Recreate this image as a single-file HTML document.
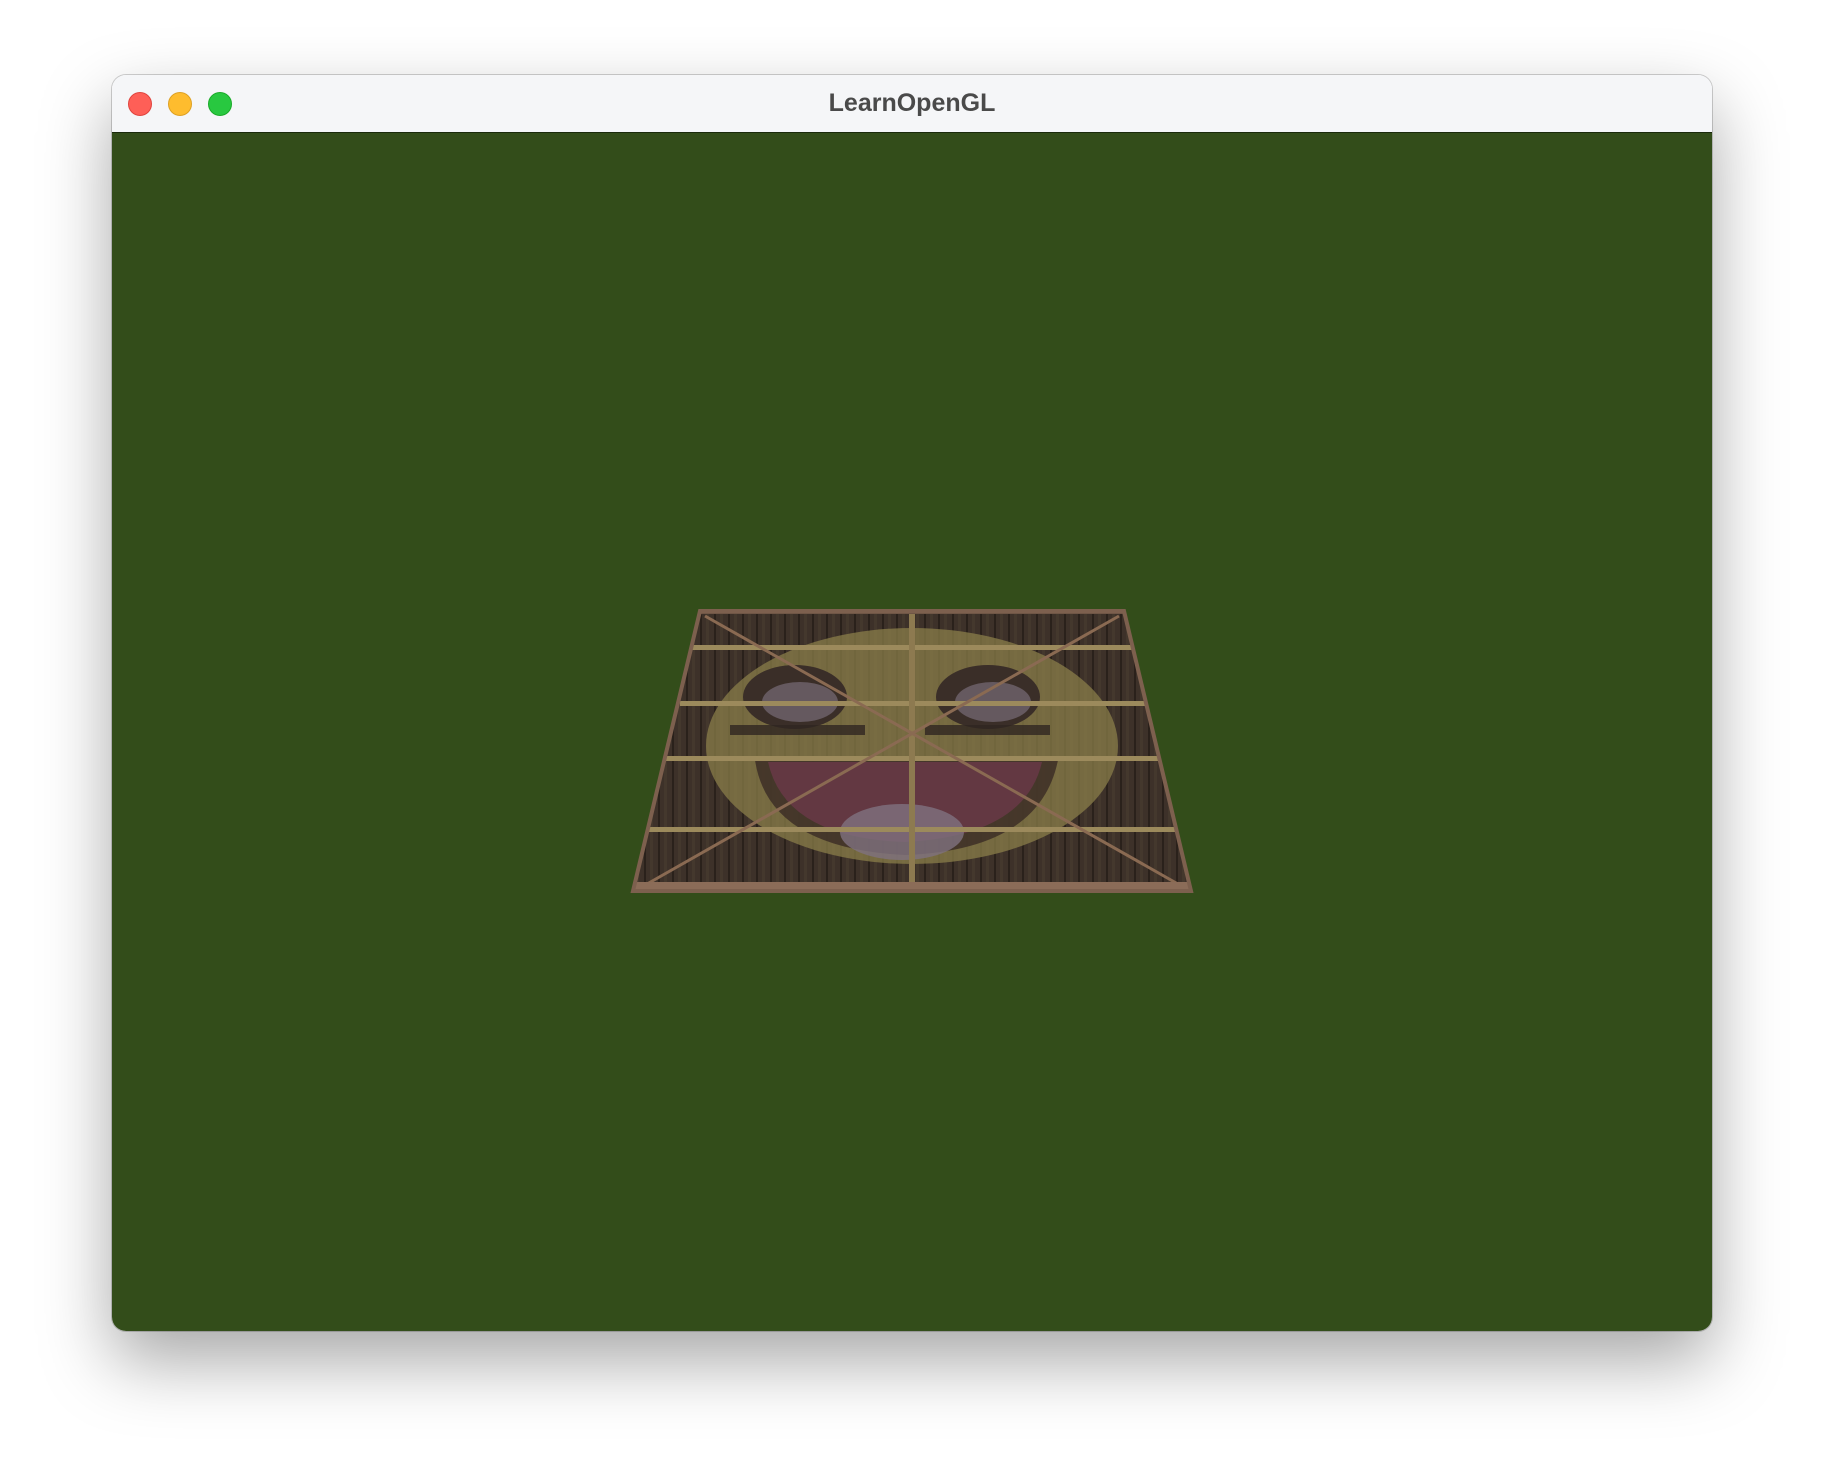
<!DOCTYPE html>
<html><head><meta charset="utf-8"><style>
html,body{margin:0;padding:0;background:#fff;width:1824px;height:1480px;overflow:hidden}
.win{position:absolute;left:112px;top:75px;width:1600px;height:1256px;border-radius:14px;overflow:hidden;box-shadow:0 30px 70px rgba(0,0,0,0.35),0 0 0 1px rgba(0,0,0,0.18)}
.tb{position:absolute;left:0;top:0;width:100%;height:57px;background:#f5f6f8;border-bottom:1px solid #1a2a0c}
.tb .t{position:absolute;left:0;right:0;top:14px;text-align:center;font:bold 25px "Liberation Sans",sans-serif;color:#4a4a4a}
.d{position:absolute;top:17px;width:24px;height:24px;border-radius:50%}
.gl{position:absolute;left:0;top:58px;width:100%;height:1198px;background:#334d1a}
svg{position:absolute;left:0;top:0}
</style></head><body>
<div class="win">
<div class="tb"><div class="d" style="left:16px;background:#fe5f57;border:1px solid #e0443e;box-sizing:border-box"></div><div class="d" style="left:56px;background:#febc2e;border:1px solid #dea123;box-sizing:border-box"></div><div class="d" style="left:96px;background:#28c840;border:1px solid #1aab29;box-sizing:border-box"></div><div class="t">LearnOpenGL</div></div>
<div class="gl"></div>
</div>
<svg width="1824" height="1480" viewBox="0 0 1824 1480">
<defs><clipPath id="q"><polygon points="700,611 1124,611 1191,891 633,891"/></clipPath>
<pattern id="pl" width="14" height="20" patternUnits="userSpaceOnUse"><rect width="14" height="20" fill="#3d3129"/><rect x="0" width="2" height="20" fill="#2a211b"/><rect x="6" width="3" height="20" fill="#4a3c31" opacity=".6"/></pattern></defs>
<g clip-path="url(#q)">
<rect x="630" y="608" width="565" height="286" fill="url(#pl)"/>
<ellipse cx="912" cy="746" rx="206" ry="118" fill="#8a7d4a" opacity=".75"/>
<path d="M755,760 Q768,848 905,855 Q1040,850 1058,760 Z" fill="#3a2a24" opacity=".8"/>
<path d="M768,762 Q785,838 905,842 Q1025,836 1042,762 Z" fill="#633842"/>
<ellipse cx="902" cy="832" rx="62" ry="28" fill="#7f7280" opacity=".8"/>
<ellipse cx="795" cy="697" rx="52" ry="32" fill="#3a2e28"/>
<ellipse cx="800" cy="702" rx="38" ry="20" fill="#65595f"/>
<ellipse cx="988" cy="697" rx="52" ry="32" fill="#3a2e28"/>
<ellipse cx="993" cy="702" rx="38" ry="20" fill="#65595f"/>
<rect x="730" y="725" width="135" height="10" fill="#2f2620" opacity=".8"/>
<rect x="925" y="725" width="125" height="10" fill="#2f2620" opacity=".8"/>
<g fill="#9c8a5c"><rect x="690" y="645" width="445" height="5"/><rect x="680" y="701" width="470" height="5"/><rect x="665" y="756" width="500" height="5"/><rect x="648" y="827" width="530" height="5"/></g>
<rect x="909" y="611" width="6" height="280" fill="#8d7a50"/>
<line x1="705" y1="616" x2="1185" y2="888" stroke="#8a6a52" stroke-width="3"/>
<line x1="1119" y1="616" x2="640" y2="888" stroke="#8a6a52" stroke-width="3"/>
<rect x="630" y="608" width="565" height="6" fill="#6f5646"/>
<rect x="630" y="882" width="565" height="10" fill="#8b6c58"/>
</g>
<polygon points="700,611 1124,611 1191,891 633,891" fill="none" stroke="#7d604e" stroke-width="4"/>
</svg>
</body></html>
